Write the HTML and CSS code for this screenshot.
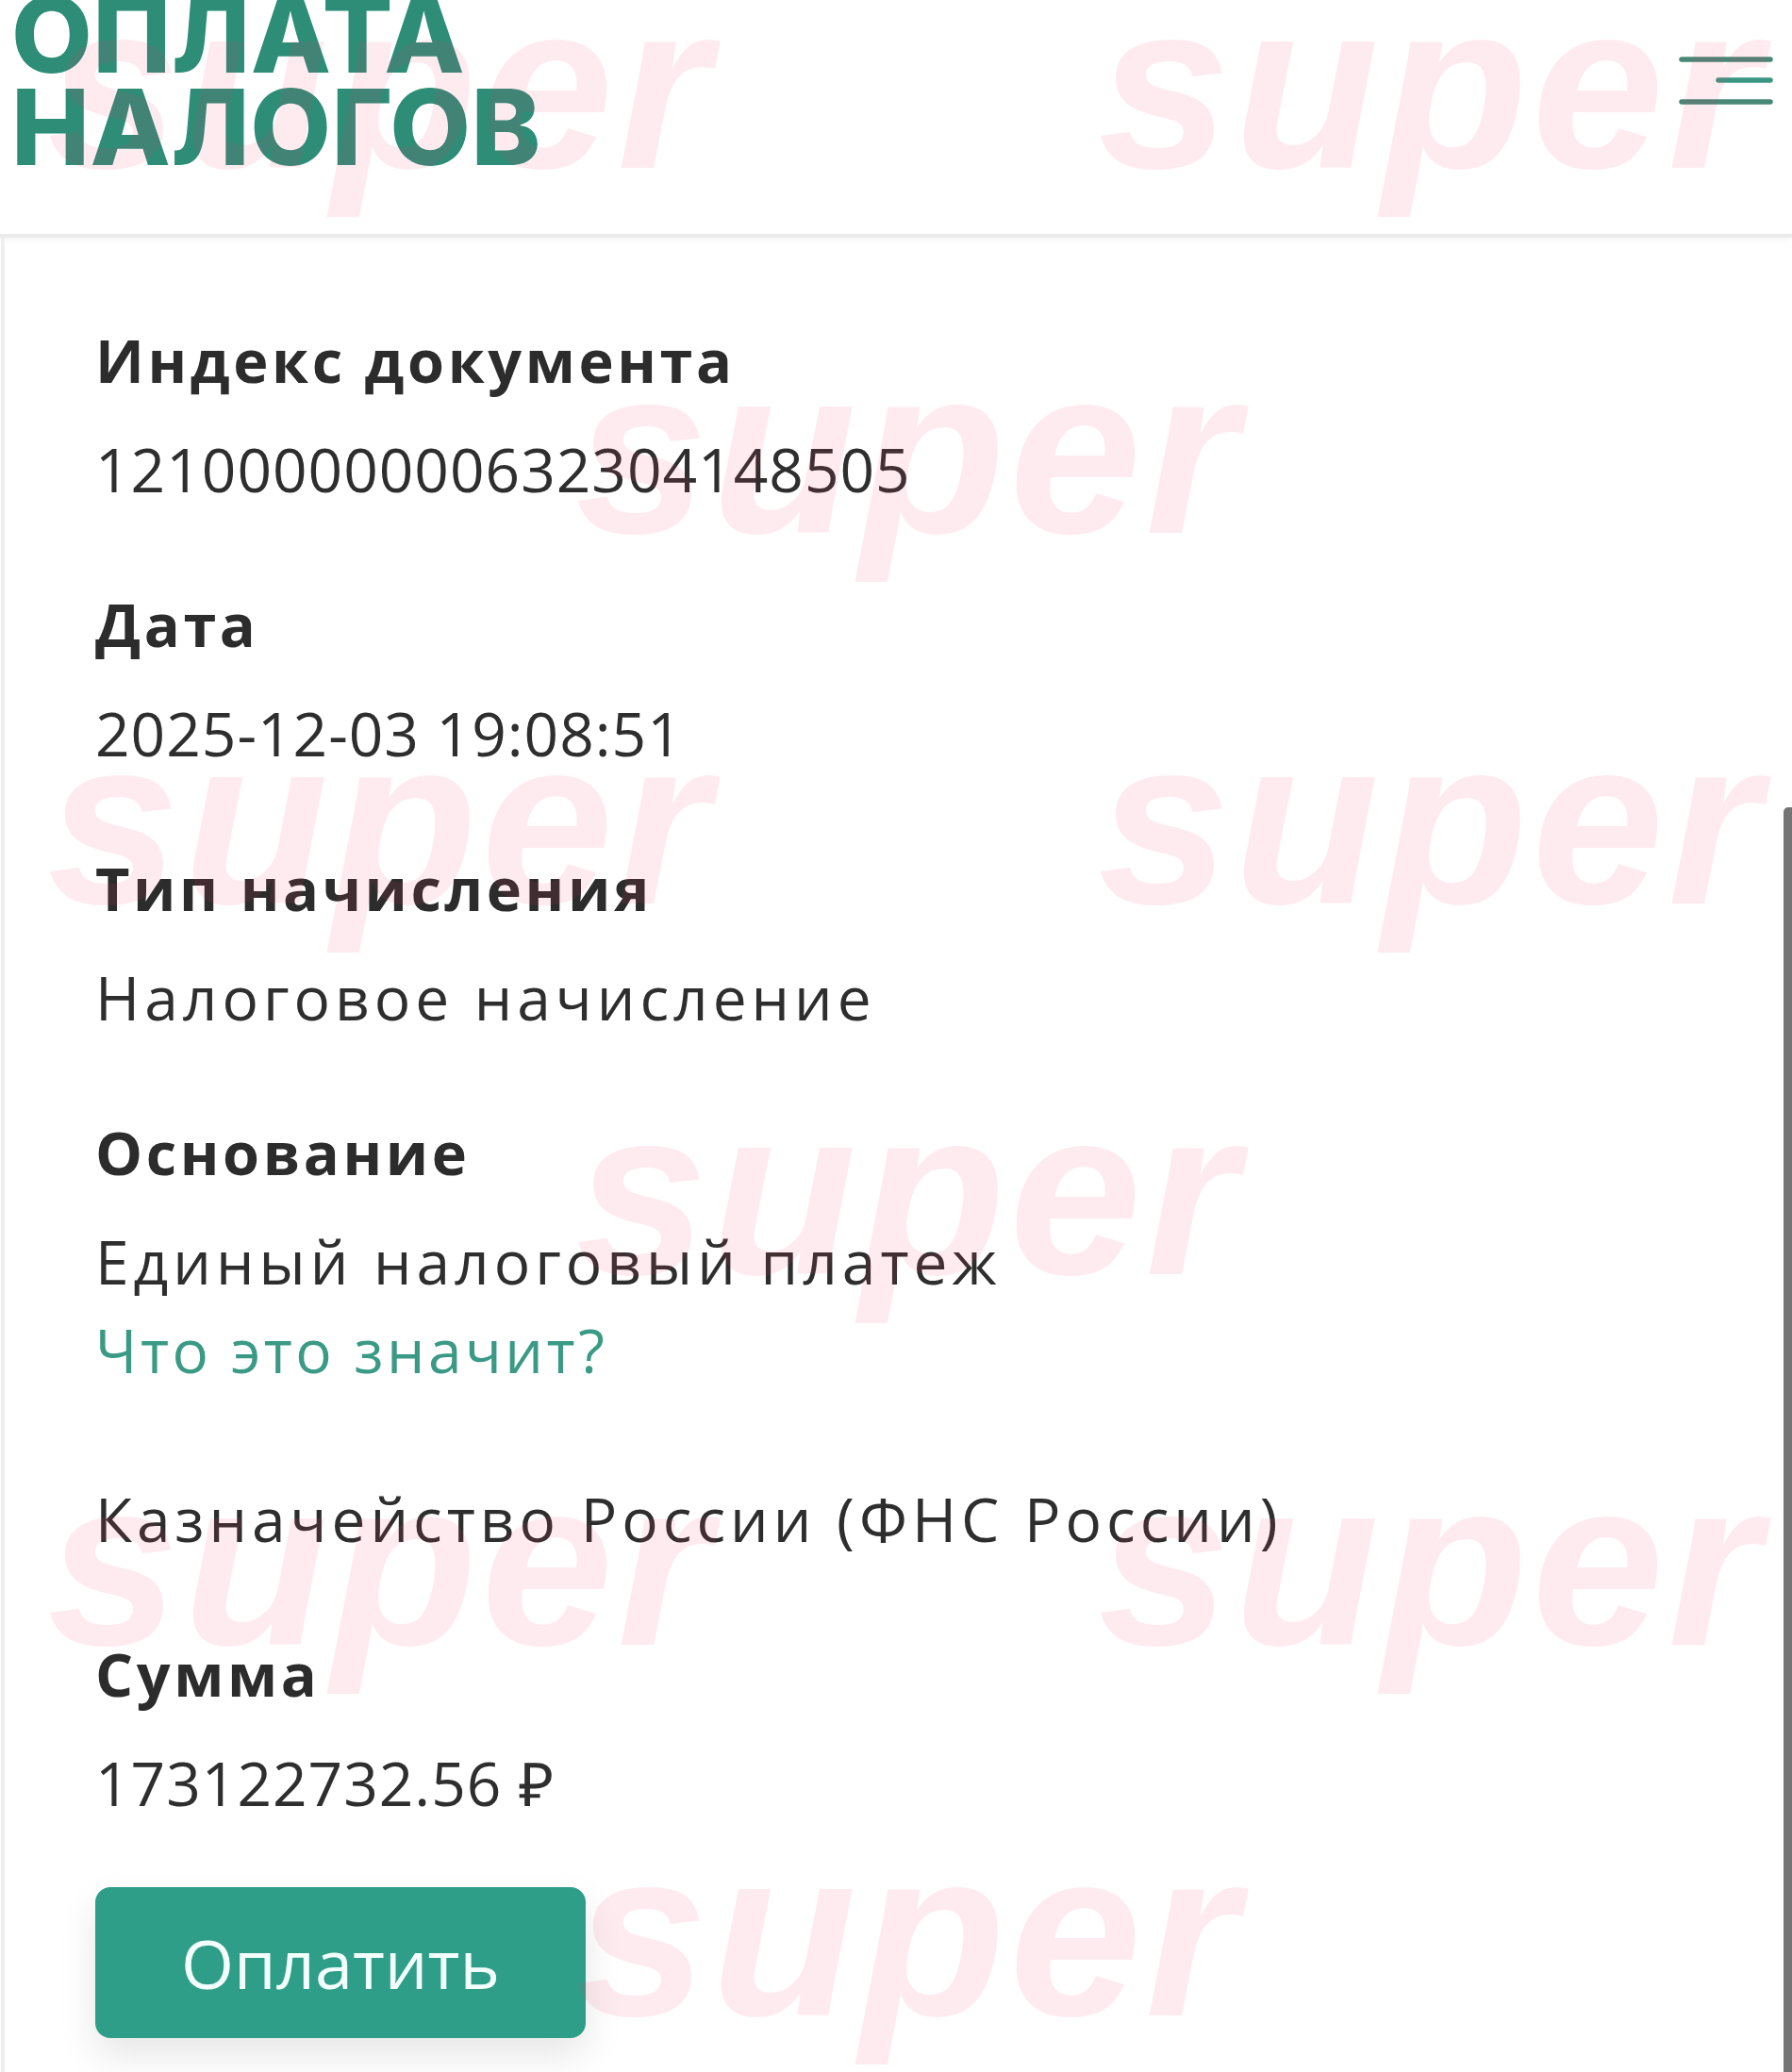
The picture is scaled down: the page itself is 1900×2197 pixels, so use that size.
FILE: index.html
```html
<!DOCTYPE html>
<html lang="ru">
<head>
<meta charset="utf-8">
<title>Оплата налогов</title>
<link rel="stylesheet" href="styles.css">
</head>
<body>
<div class="page">
  <header class="topbar">
    <h1 class="brand">ОПЛАТА<br>НАЛОГОВ</h1>
    <button class="burger" aria-label="Меню">
      <svg width="104" height="64" viewBox="0 0 104 64">
        <line x1="5" y1="10" x2="99" y2="10" class="burger-line"/>
        <line x1="44" y1="32" x2="99" y2="32" class="burger-line burger-mid"/>
        <line x1="5" y1="55" x2="99" y2="55" class="burger-line"/>
      </svg>
    </button>
  </header>

  <main class="details">
    <section class="field">
      <h2 class="label">Индекс документа</h2>
      <p class="value value-num">12100000000632304148505</p>
    </section>
    <section class="field">
      <h2 class="label">Дата</h2>
      <p class="value value-num">2025-12-03 19:08:51</p>
    </section>
    <section class="field">
      <h2 class="label">Тип начисления</h2>
      <p class="value">Налоговое начисление</p>
    </section>
    <section class="field">
      <h2 class="label">Основание</h2>
      <p class="value">Единый налоговый платеж</p>
      <a class="hint" href="#">Что это значит?</a>
    </section>
    <section class="field field-plain">
      <p class="value">Казначейство России (ФНС России)</p>
    </section>
    <section class="field">
      <h2 class="label">Сумма</h2>
      <p class="value value-num">173122732.56 ₽</p>
    </section>
    <button class="pay">Оплатить</button>
  </main>

  <div class="watermarks" aria-hidden="true">
    <span class="wm wm-l r0">super</span>
    <span class="wm wm-r r0">super</span>
    <span class="wm wm-c r1">super</span>
    <span class="wm wm-l r2">super</span>
    <span class="wm wm-r r2">super</span>
    <span class="wm wm-c r3">super</span>
    <span class="wm wm-l r4">super</span>
    <span class="wm wm-r r4">super</span>
    <span class="wm wm-c r5">super</span>
  </div>
</div>
</body>
</html>
```

FILE: styles.css
```css
* { box-sizing: border-box; }

html, body {
  margin: 0;
  padding: 0;
  background: #ffffff;
}

body {
  font-family: "Open Sans", "Liberation Sans", sans-serif;
  color: #2f2f2f;
}

.page {
  position: relative;
  width: 1900px;
  height: 2197px;
  overflow: hidden;
  background: #ffffff;
}

/* ---------- header ---------- */
.topbar {
  display: flex;
  justify-content: space-between;
  align-items: flex-start;
  height: 252px;
  padding: 0 18px 0 12px;
  border-bottom: 4px solid #ebebeb;
  box-shadow: 0 3px 6px rgba(0, 0, 0, 0.04);
}

.brand {
  margin: -12px 0 0 0;
  font-family: "Inter", "Liberation Sans", sans-serif;
  font-weight: 800;
  font-size: 111px;
  line-height: 98px;
  color: #2d8d77;
  letter-spacing: 0.5px;
}

.burger {
  margin-top: 53px;
  padding: 0;
  border: 0;
  background: none;
  display: block;
}

.burger svg { display: block; }

.burger-line {
  stroke: #468776;
  stroke-width: 5.5;
  stroke-linecap: round;
}

.burger-mid { stroke: #3a9682; }

/* ---------- details ---------- */
.details {
  margin-left: 1px;
  border-left: 4px solid #efefef;
  padding: 90px 0 0 96px;
  height: 1945px;
}

.field {
  margin-bottom: 84px;
}

.field-plain {
  padding-top: 15px;
}

.label {
  margin: 0;
  font-size: 63px;
  line-height: 80px;
  font-weight: 700;
  color: #2c2c2c;
  letter-spacing: 3.6px;
}

.value {
  margin: 36px 0 0 0;
  font-size: 64px;
  line-height: 80px;
  font-weight: 400;
  color: #2e2e2e;
  letter-spacing: 5px;
}

.value-num { letter-spacing: 1px; }

.field-plain .value { margin-top: 0; }

.hint {
  display: block;
  margin-top: 14px;
  font-size: 64px;
  line-height: 80px;
  color: #3a9a85;
  text-decoration: none;
  letter-spacing: 3.5px;
}

.field:last-of-type { margin-bottom: 70px; }

.pay {
  display: block;
  width: 520px;
  height: 160px;
  border: 0;
  border-radius: 16px;
  background: #2f9e88;
  color: #f2fffb;
  font-family: "Open Sans", "Liberation Sans", sans-serif;
  font-size: 72px;
  font-weight: 400;
  box-shadow: 0 18px 40px rgba(0, 0, 0, 0.10);
}

/* ---------- scrollbar mark ---------- */
.page::after {
  content: "";
  position: absolute;
  right: 0;
  top: 856px;
  width: 9px;
  height: 1400px;
  background: #747474;
  border-radius: 5px 0 0 0;
}

/* ---------- watermark overlay ---------- */
.watermarks {
  position: absolute;
  inset: 0;
  pointer-events: none;
}

.wm {
  position: absolute;
  font-family: "Liberation Sans", "Arial", sans-serif;
  font-weight: 700;
  font-style: italic;
  font-size: 252px;
  line-height: 1;
  letter-spacing: 4px;
  color: rgba(250, 60, 110, 0.10);
}

.wm-l { left: 50px; }
.wm-c { left: 610px; }
.wm-r { left: 1164px; }

.r0 { top: -35px; }
.r1 { top: 352px; }
.r2 { top: 745px; }
.r3 { top: 1138px; }
.r4 { top: 1531px; }
.r5 { top: 1924px; }
```
